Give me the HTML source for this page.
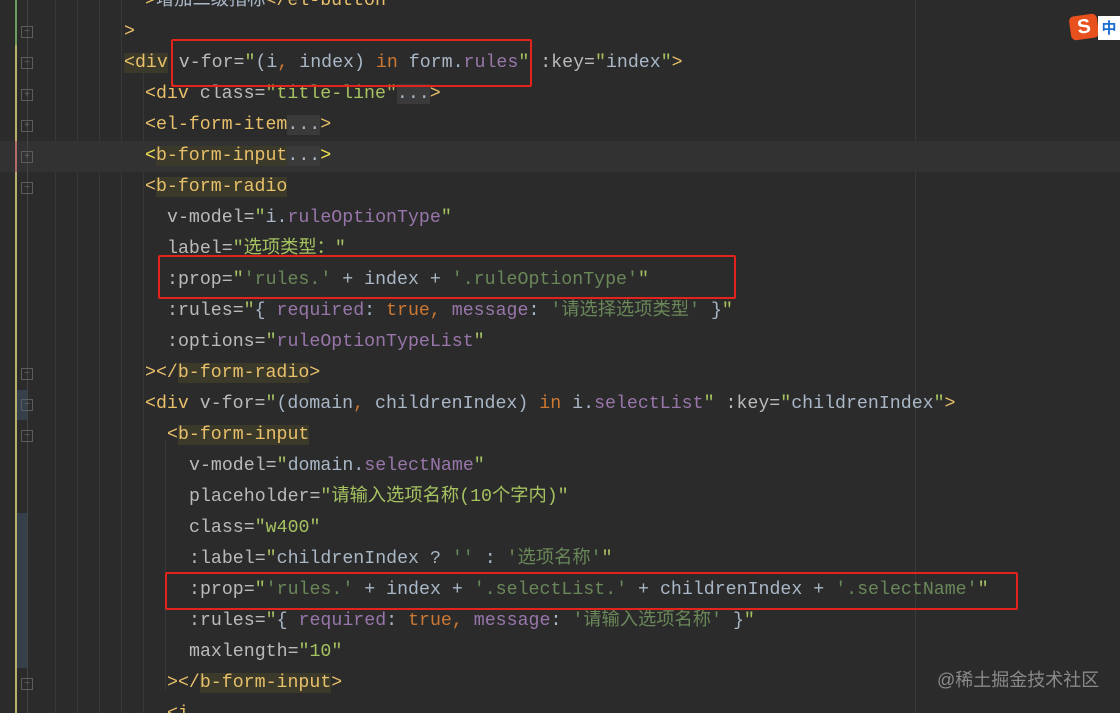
<!DOCTYPE html>
<html><head><meta charset="utf-8"><style>
html,body{margin:0;width:1120px;height:713px;overflow:hidden}
body{background:#2b2b2b;position:relative;font-family:"Liberation Mono","Noto Sans CJK SC",monospace;}
.l{position:absolute;white-space:pre;font-size:18.25px;line-height:31px;height:31px;color:#a9b7c6}
.t{color:#e8bf6a}.a{color:#bababa}.s{color:#a5c261}.p{color:#9876aa}.k{color:#cc7832}.g{color:#6a8759}
.hl{background:#3b3a2a}.fd{background:#3a3a3a;color:#a9b7c6}
.box{position:absolute;border:2px solid #e3231c;border-radius:2px}
.guide{position:absolute;width:1px;background:#383838;top:0;height:713px}
.fold{position:absolute;left:21px;width:12px;height:12px;border:1px solid #5c5c5c;box-sizing:border-box;color:#666;font-size:10px;line-height:10px;text-align:center;font-family:"Liberation Sans",sans-serif}
</style></head><body>
<div class="guide" style="left:55px"></div><div class="guide" style="left:77px"></div><div class="guide" style="left:99px"></div><div class="guide" style="left:121px"></div>
<div class="guide" style="left:143px;top:70px;height:643px"></div>
<div class="guide" style="left:165px;top:440px;height:250px"></div>
<div class="guide" style="left:915px;background:#3a3a3a"></div>
<div style="position:absolute;left:0;top:141px;width:1120px;height:31px;background:#323232"></div>
<div style="position:absolute;left:15px;top:0;width:2px;height:45px;background:#6a9e5a"></div>
<div style="position:absolute;left:15px;top:45px;width:2px;height:668px;background:#b8b06a"></div>
<div style="position:absolute;left:15px;top:141px;width:2px;height:31px;background:#b56a6a"></div>
<div style="position:absolute;left:17px;top:390px;width:10px;height:30px;background:#35404a"></div>
<div style="position:absolute;left:17px;top:513px;width:10px;height:155px;background:#35404a"></div>
<div style="position:absolute;left:27px;top:0;width:1px;height:713px;background:#444"></div>
<div class="fold" style="top:26px">−</div><div class="fold" style="top:57px">−</div>
<div class="fold" style="top:89px">+</div><div class="fold" style="top:120px">+</div><div class="fold" style="top:151px">+</div>
<div class="fold" style="top:182px">−</div><div class="fold" style="top:368px">−</div><div class="fold" style="top:399px">−</div>
<div class="fold" style="top:430px">−</div><div class="fold" style="top:678px">−</div>

<div class="l" style="left:145px;top:-14px"><span class="t">&gt;</span>增加二级指标<span class="t">&lt;/el-button</span></div>
<div class="l" style="left:124px;top:17px"><span class="t">&gt;</span></div>
<div class="l" style="left:124px;top:48px"><span class="t hl">&lt;div</span> <span class="a">v-for=</span><span class="s">"</span>(i<span class="k">,</span> index) <span class="k">in</span> form.<span class="p">rules</span><span class="s">"</span> <span class="a">:key=</span><span class="s">"</span>index<span class="s">"</span><span class="t">&gt;</span></div>
<div class="l" style="left:145px;top:79px"><span class="t">&lt;div</span> <span class="a">class=</span><span class="s">"title-line"</span><span class="fd">...</span><span class="t">&gt;</span></div>
<div class="l" style="left:145px;top:110px"><span class="t">&lt;el-form-item</span><span class="fd">...</span><span class="t">&gt;</span></div>
<div class="l" style="left:145px;top:141px"><span class="t" style="color:#f0e050">&lt;</span><span class="t hl">b-form-input</span><span class="fd">...</span><span class="t" style="color:#f0e050">&gt;</span></div>
<div class="l" style="left:145px;top:172px"><span class="t">&lt;<span class="hl">b-form-radio</span></span></div>
<div class="l" style="left:167px;top:203px"><span class="a">v-model=</span><span class="s">"</span>i.<span class="p">ruleOptionType</span><span class="s">"</span></div>
<div class="l" style="left:167px;top:234px"><span class="a">label=</span><span class="s">"选项类型：" </span></div>
<div class="l" style="left:167px;top:265px"><span class="a">:prop=</span><span class="s">"</span><span class="g">'rules.'</span> + index + <span class="g">'.ruleOptionType'</span><span class="s">"</span></div>
<div class="l" style="left:167px;top:296px"><span class="a">:rules=</span><span class="s">"</span>{ <span class="p">required</span>: <span class="k">true,</span> <span class="p">message</span>: <span class="g">'请选择选项类型'</span> }<span class="s">"</span></div>
<div class="l" style="left:167px;top:327px"><span class="a">:options=</span><span class="s">"</span><span class="p">ruleOptionTypeList</span><span class="s">"</span></div>
<div class="l" style="left:145px;top:358px"><span class="t">&gt;&lt;/<span class="hl">b-form-radio</span>&gt;</span></div>
<div class="l" style="left:145px;top:389px"><span class="t">&lt;div</span> <span class="a">v-for=</span><span class="s">"</span>(domain<span class="k">,</span> childrenIndex) <span class="k">in</span> i.<span class="p">selectList</span><span class="s">"</span> <span class="a">:key=</span><span class="s">"</span>childrenIndex<span class="s">"</span><span class="t">&gt;</span></div>
<div class="l" style="left:167px;top:420px"><span class="t">&lt;<span class="hl">b-form-input</span></span></div>
<div class="l" style="left:189px;top:451px"><span class="a">v-model=</span><span class="s">"</span>domain.<span class="p">selectName</span><span class="s">"</span></div>
<div class="l" style="left:189px;top:482px"><span class="a">placeholder=</span><span class="s">"请输入选项名称(10个字内)"</span></div>
<div class="l" style="left:189px;top:513px"><span class="a">class=</span><span class="s">"w400"</span></div>
<div class="l" style="left:189px;top:544px"><span class="a">:label=</span><span class="s">"</span>childrenIndex ? <span class="g">''</span> : <span class="g">'选项名称'</span><span class="s">"</span></div>
<div class="l" style="left:189px;top:575px"><span class="a">:prop=</span><span class="s">"</span><span class="g">'rules.'</span> + index + <span class="g">'.selectList.'</span> + childrenIndex + <span class="g">'.selectName'</span><span class="s">"</span></div>
<div class="l" style="left:189px;top:606px"><span class="a">:rules=</span><span class="s">"</span>{ <span class="p">required</span>: <span class="k">true,</span> <span class="p">message</span>: <span class="g">'请输入选项名称'</span> }<span class="s">"</span></div>
<div class="l" style="left:189px;top:637px"><span class="a">maxlength=</span><span class="s">"10"</span></div>
<div class="l" style="left:167px;top:668px"><span class="t">&gt;&lt;/<span class="hl">b-form-input</span>&gt;</span></div>
<div class="l" style="left:167px;top:699px"><span class="t">&lt;i</span></div>

<div class="box" style="left:171px;top:39px;width:357px;height:44px"></div>
<div class="box" style="left:158px;top:255px;width:574px;height:40px"></div>
<div class="box" style="left:165px;top:572px;width:849px;height:34px"></div>

<div style="position:absolute;left:1070px;top:15px;width:28px;height:24px;background:#e8501e;border-radius:5px;transform:rotate(-8deg);color:#fff;font:bold 20px/24px 'Liberation Sans',sans-serif;text-align:center">S</div>
<div style="position:absolute;left:1098px;top:16px;width:22px;height:24px;background:#fff;color:#1a6fd0;font:bold 15px/24px 'Noto Sans CJK SC',sans-serif;text-align:center">中</div>
<div style="position:absolute;left:937px;top:668px;color:#8a8a8a;font:18px/24px 'Liberation Sans','Noto Sans CJK SC',sans-serif">@稀土掘金技术社区</div>
</body></html>
